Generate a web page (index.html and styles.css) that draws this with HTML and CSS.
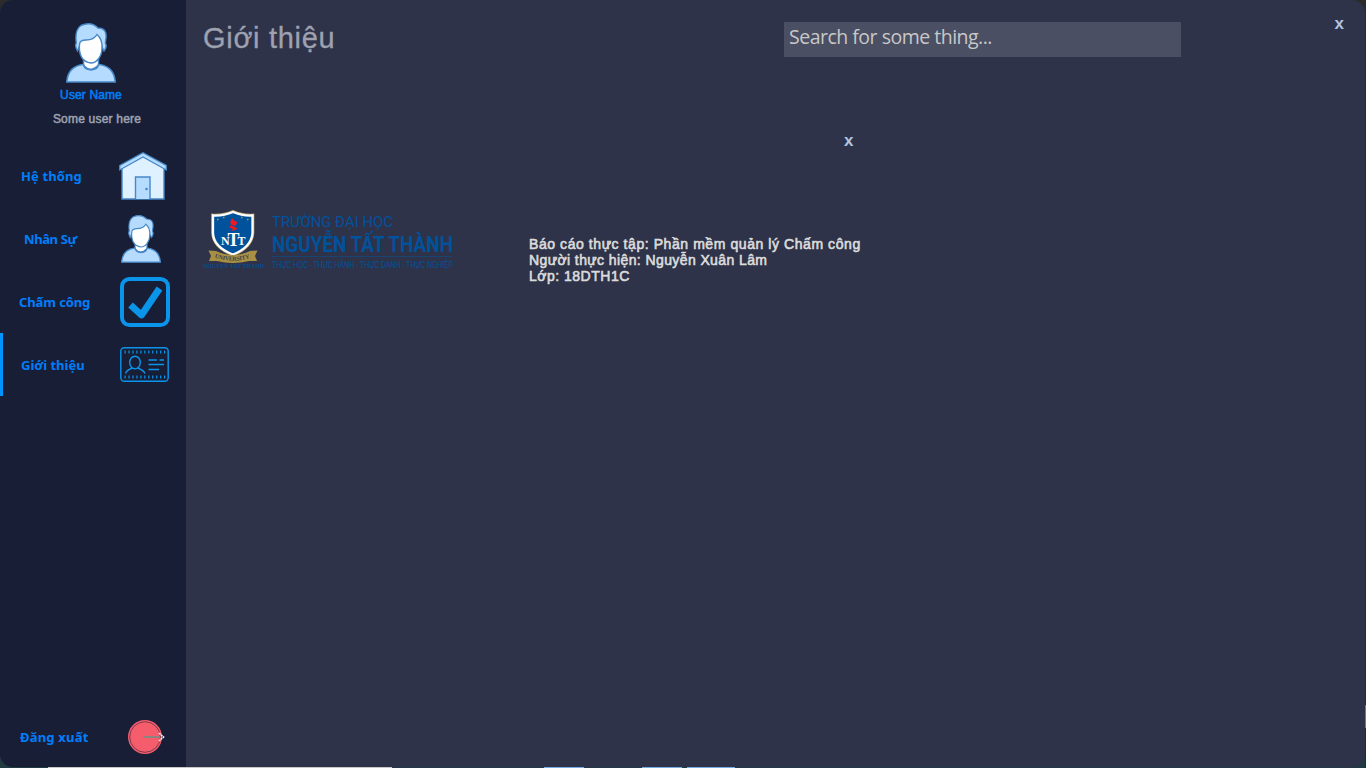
FILE: index.html
```html
<!DOCTYPE html>
<html lang="vi">
<head>
<meta charset="utf-8">
<title>Giới thiệu</title>
<link rel="stylesheet" href="styles.css">
</head>
<body>
<svg class="defs" width="0" height="0" aria-hidden="true">
  <symbol id="person" viewBox="0 0 50 60">
    <path d="M11.500 28Q8.500 23 10.300 20Q8.500 7 15 2.500Q25-2 32 5Q41 5 40 15L39.300 20Q41.500 24 38 28L35 22H14Z" fill="#b5dcff" stroke="#4788c7" stroke-width="1.400"/>
    <path d="M17.500 34V42Q24 50.500 32.500 42V34Z" fill="#fff" stroke="#4788c7" stroke-width="1.400"/>
    <path d="M.7 59Q2 43 17.500 41.500Q18 46.500 25 47Q32 46.500 32.500 41.500Q48 43 49.300 59Z" fill="#b5dcff" stroke="#4788c7" stroke-width="1.600"/>
    <path d="M13.500 21Q14 17 20 17Q28 17 31 11.500Q36.500 16 36 25C36 33 31 40 25 40C17 39 12.500 33 13.500 21Z" fill="#fff" stroke="#4788c7" stroke-width="1.400"/>
  </symbol>
</svg>
<div class="window">
  <aside class="sidebar">
    <div class="profile">
      <svg class="avatar"><use href="#person"/></svg>
      <div class="user-name">User Name</div>
      <div class="user-note">Some user here</div>
    </div>
    <nav class="nav">
      <a class="item home"><span>Hệ thống</span>
        <svg class="icon-home" width="48" height="48" viewBox="0 0 48 48">
          <path d="M3 14L24 3L45 14V47H3Z" fill="#dff0fe" stroke="#4788c7" stroke-width="1.400"/>
          <path d="M.7 13.500L24 .8L47.300 13.500V18L24 5L.7 18Z" fill="#b5dcff" stroke="#4788c7" stroke-width="1.300"/>
          <path d="M16.500 47V25H31V47" fill="#b5dcff" stroke="#4788c7" stroke-width="1.400"/>
          <circle cx="27.500" cy="37" r="1.300" fill="#4788c7"/>
        </svg></a>
      <a class="item staff"><span>Nhân Sự</span><svg class="icon-staff"><use href="#person"/></svg></a>
      <a class="item check"><span>Chấm công</span>
        <svg class="icon-check" width="50" height="50" viewBox="0 0 50 50">
          <rect x="2" y="2" width="46" height="46" rx="7.500" fill="none" stroke="#0a94ea" stroke-width="4"/>
          <path d="M10.500 28L21.500 38L39.500 11.500" fill="none" stroke="#0a94ea" stroke-width="6.800" stroke-linejoin="round"/>
        </svg></a>
      <a class="item about active"><span>Giới thiệu</span>
        <svg class="icon-card" width="49" height="35" viewBox="0 0 49 35" fill="none" stroke="#0a94ea" stroke-width="1.400">
          <rect x=".8" y=".8" width="47.400" height="33.400" rx="3.500"/>
          <path d="M4.500 5H46M4.500 30H46" stroke-width="2.800" stroke-dasharray="1.200 2.750"/>
          <ellipse cx="15" cy="15.500" rx="5.300" ry="6.300"/>
          <path d="M5.500 26.500Q6.500 23 12.500 21M17.500 21Q23.500 23 25 26.500M28.500 13H37M39.500 13H44M28.500 17.500H44M28.500 22.500H39"/>
        </svg></a>
    </nav>
    <a class="item logout"><span>Đăng xuất</span>
      <svg class="icon-exit" width="37" height="34" viewBox="0 0 37 34">
        <circle cx="17" cy="17" r="17" fill="#f55d6d"/>
        <circle cx="17" cy="17" r="15.300" fill="none" stroke="#823a4c" stroke-width="1"/>
        <path d="M15 17H32" stroke="#8b8580" stroke-width="1.800"/>
        <path d="M31 13L35.500 17L31 21" fill="none" stroke="#f7efe7" stroke-width="1.600" stroke-dasharray="2 .6"/>
      </svg></a>
  </aside>
  <main class="main">
    <header class="header">
      <h1 class="title">Giới thiệu</h1>
      <div class="search">Search for some thing...</div>
      <div class="close">x</div>
    </header>
    <div class="panel-bar"><div class="close">x</div></div>
    <section class="content">
      <svg class="logo" width="270" height="80" viewBox="0 0 270 80">
        <path d="M38 12Q29 16 18 15.500V33Q18.500 47 38 54.500Q56.500 47 57.500 33V15.500Q47 16 38 12Z" fill="#00529c" stroke="#b8a46e" stroke-width="3.600"/>
        <path d="M38 12Q29 16 18 15.500V33Q18.500 47 38 54.500Q56.500 47 57.500 33V15.500Q47 16 38 12Z" fill="#00529c" stroke="#fff" stroke-width="2.300"/>
        <path d="M22 19.500h1.500M28 17.500h1.500M46 17.500h1.500M52 19.500h1.500" stroke="#a69c4b" stroke-width="1.500"/>
        <path d="M38 18Q37 20 41.500 21.500Q43 23 40 26L36 24.500Q34 21 38 18ZM35 25L42 28Q42 30 37 31Q39 28 35 28Z" fill="#f01824"/>
        <g class="crest" fill="#fff">
          <text x="26" y="44.500" font-size="12">N</text>
          <text x="32.500" y="46" font-size="18">T</text>
          <text x="42.500" y="44.500" font-size="12">T</text>
        </g>
        <path d="M13.500 50.500L21 51Q38 59 55 51L62.500 50.500L60 56L62 61H54Q38 65 22 61H14L16 56Z" fill="#a98f43"/>
        <path id="ribbon" d="M19.500 57.500Q38 64 56.500 57.500" fill="none"/>
        <text class="crest" font-size="6" fill="#374151"><textPath href="#ribbon" textLength="36">UNIVERSITY</textPath></text>
        <text class="crest" x="8" y="68" font-size="6" fill="#034d91" textLength="61" lengthAdjust="spacingAndGlyphs">NGUYEN TAT THANH</text>
        <g class="school" fill="#00529c">
          <text x="77" y="27" font-size="15.500" textLength="121" lengthAdjust="spacingAndGlyphs">TRƯỜNG ĐẠI HỌC</text>
          <text x="77" y="52" font-size="22" font-weight="700" textLength="181" lengthAdjust="spacingAndGlyphs">NGUYỄN TẤT THÀNH</text>
          <path d="M77 56.500H257" stroke="#08518f" stroke-width=".6"/>
          <text x="77" y="67.700" font-size="8.300" textLength="181" lengthAdjust="spacingAndGlyphs">THỰC HỌC - THỰC HÀNH - THỰC DANH - THỰC NGHIỆP</text>
        </g>
      </svg>
      <div class="info">
        <div class="l1">Báo cáo thực tập: Phần mềm quản lý Chấm công</div>
        <div class="l2">Người thực hiện: Nguyễn Xuân Lâm</div>
        <div class="l3">Lớp: 18DTH1C</div>
      </div>
    </section>
  </main>
</div>
</body>
</html>
```
FILE: styles.css
```css
* { box-sizing: border-box; }
body {
  margin: 0;
  width: 1366px;
  height: 768px;
  overflow: hidden;
  font-family: "Liberation Sans", sans-serif;
  background:
    linear-gradient(90deg, #203c40 48px, #c9c7c9 48px 392px, #243746 392px 544px, #76ace2 544px 584px, #243746 584px 642px, #76ace2 642px 682px, #243746 682px 687px, #76ace2 687px 735px, #243746 735px) 0 767px / 1366px 1px no-repeat,
    linear-gradient(#2b2b2b 705px, #c7631f 705px 728px, #172b49 728px) 1365px 0 / 1px 768px no-repeat,
    linear-gradient(#2b2b2b 600px, #203c40 600px);
}
.defs { display: none; }
.window {
  display: flex;
  width: 1365px;
  height: 767px;
  border-radius: 13px;
  overflow: hidden;
  background: #2e3349;
}
.sidebar {
  display: flex;
  flex-direction: column;
  width: 186px;
  background: #181e36;
}
.profile {
  display: flex;
  flex-direction: column;
  align-items: center;
  height: 144px;
  padding: 23px 4px 0 0;
}
.avatar { width: 50px; height: 60px; }
.user-name, .user-note {
  font-size: 12px;
  line-height: 14px;
  white-space: nowrap;
}
.user-name { margin-top: 5px; color: #007ef9; letter-spacing: .12px; -webkit-text-stroke: .5px; }
.user-note { margin: 10px 0 0 12px; color: #9ea1b0; letter-spacing: .2px; -webkit-text-stroke: .5px; }
.item {
  display: flex;
  align-items: center;
  justify-content: space-between;
  height: 63px;
  color: #007ef9;
  font: bold 13px "Noto Sans", sans-serif;
  white-space: nowrap;
}
.home { padding: 0 19px 0 21px; letter-spacing: .1px; }
.staff { padding: 1px 25px 0 24px; letter-spacing: -.4px; }
.icon-staff { width: 40px; height: 48px; }
.check { padding: 1px 16px 0 19px; letter-spacing: -.1px; }
.about { padding: 0 17.5px 0 18px; border-left: 3px solid #0094ff; }
.logout { height: 62px; margin-top: auto; padding: 1px 21px 0 20px; letter-spacing: .2px; }
.main { flex: 1; }
.header {
  display: flex;
  align-items: flex-start;
  height: 130px;
  padding: 22px 20px 0 17px;
}
.title {
  width: 581px;
  margin: 0;
  color: #9ea1b0;
  font-size: 29px;
  font-weight: 400;
  line-height: 33px;
  letter-spacing: .7px;
  -webkit-text-stroke: .3px;
}
.search {
  width: 397px;
  height: 35px;
  padding-left: 5px;
  background: #4a4f63;
  color: #c8c8c8;
  font: 19.5px/29px "Open Sans", sans-serif;
  letter-spacing: -.5px;
}
.close {
  color: #b0c4e0;
  font: bold 17px/22px "Liberation Sans", sans-serif;
}
.header .close { margin: -9px 1px 0 auto; }
.panel-bar { height: 70px; padding-left: 658px; }
.content { display: flex; padding-left: 9px; }
.logo { flex: none; overflow: visible; }
.crest { font-family: "Liberation Serif", serif; font-weight: 700; }
.school { font-family: Roboto, sans-serif; }
.info {
  margin: 36px 0 0 64px;
  color: #dcdcdc;
  font-size: 14px;
  line-height: 16px;
  white-space: nowrap;
  -webkit-text-stroke: .6px;
}
.l1 { letter-spacing: .57px; }
.l2 { letter-spacing: .4px; }
.l3 { letter-spacing: .5px; }
```
